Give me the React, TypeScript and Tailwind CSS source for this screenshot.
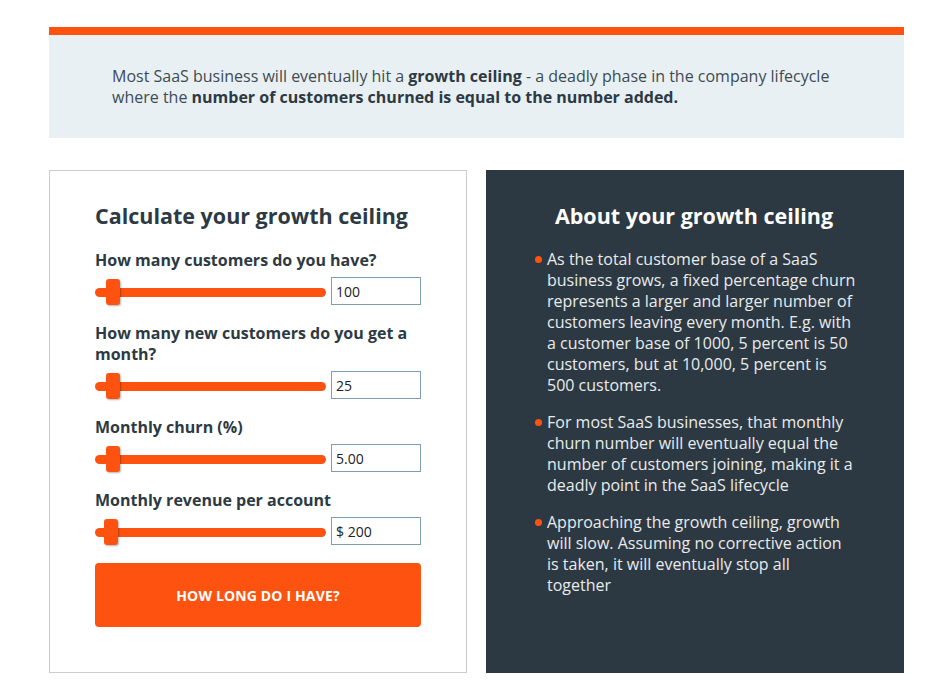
import React from 'react';

const font = { fontFamily: '"Open Sans", "Noto Sans", Arial, sans-serif' };

interface SliderRow {
  label: string;
  value: string;
  offset: string;
}

const rows: SliderRow[] = [
  { label: 'How many customers do you have?', value: '100', offset: 'left-[11px]' },
  { label: 'How many new customers do you get a month?', value: '25', offset: 'left-[11px]' },
  { label: 'Monthly churn (%)', value: '5.00', offset: 'left-[11px]' },
  { label: 'Monthly revenue per account', value: '$ 200', offset: 'left-[9px]' },
];

const bullets = [
  'As the total customer base of a SaaS business grows, a fixed percentage churn represents a larger and larger number of customers leaving every month. E.g. with a customer base of 1000, 5 percent is 50 customers, but at 10,000, 5 percent is 500 customers.',
  'For most SaaS businesses, that monthly churn number will eventually equal the number of customers joining, making it a deadly point in the SaaS lifecycle',
  'Approaching the growth ceiling, growth will slow. Assuming no corrective action is taken, it will eventually stop all together',
];

function Slider({ row }: { row: SliderRow }) {
  return (
    <div className="mb-[18px]">
      <div className="mb-[6px] text-[16px] leading-[21px] font-bold text-[#2d3a43]">{row.label}</div>
      <div className="flex items-start gap-[5px]">
        <div className="relative mt-[2px] h-[26px] w-[232px]">
          <div className="absolute left-0 right-0 top-[8.5px] h-[9px] rounded-full bg-[#fe5310]" />
          <div
            className={`absolute top-0 ${row.offset} h-[26px] w-[14px] rounded-[3px] bg-[#fe5310] shadow-[1px_1px_2px_rgba(0,0,0,0.3)]`}
          />
        </div>
        <input
          readOnly
          value={row.value}
          className="h-[28px] w-[90px] border border-[#7f9db0] bg-white pl-[4px] text-[14px] text-[#222] outline-none"
          style={font}
        />
      </div>
    </div>
  );
}

export default function App() {
  return (
    <div className="min-h-screen bg-white pt-[27px]" style={font}>
      <div className="ml-[49px] w-[855px]">
        <div className="border-t-[8px] border-[#fe5310] bg-[#e9f0f3] px-[63px] pt-[31px] pb-[30px] text-[16px] leading-[21px] text-[#3d4b55]">
          Most SaaS business will eventually hit a <b className="text-[#2d3a43]">growth ceiling</b> - a deadly phase in the
          company lifecycle where the{' '}
          <b className="text-[#2d3a43]">number of customers churned is equal to the number added.</b>
        </div>

        <div className="mt-[32px] flex gap-[19px]">
          <div className="w-[418px] border border-[#cccccc] bg-white px-[45px] pt-[30px] pb-[45px]">
            <h2 className="mb-[19px] text-[21.5px] leading-[30px] font-bold text-[#2d3a43]">
              Calculate your growth ceiling
            </h2>
            {rows.map((row) => (
              <Slider key={row.label} row={row} />
            ))}
            <button className="mt-[1px] flex h-[64px] w-[326px] items-center justify-center rounded-[4px] bg-[#fe5310] text-[14px] font-bold tracking-[0.15px] text-white uppercase">
              How long do I have?
            </button>
          </div>

          <div className="w-[418px] bg-[#2d3942] pl-[46px] pr-[48px] pt-[31px]">
            <h2 className="mb-[18px] text-center text-[21.5px] leading-[30px] font-bold text-white">
              About your growth ceiling
            </h2>
            <ul>
              {bullets.map((text) => (
                <li key={text} className="relative mb-[16px] pl-[15px] text-[16px] leading-[21px] text-[#e8ebed]">
                  <span className="absolute left-[3px] top-[7px] h-[7px] w-[7px] rounded-full bg-[#fe5310]" />
                  {text}
                </li>
              ))}
            </ul>
          </div>
        </div>
      </div>
    </div>
  );
}
